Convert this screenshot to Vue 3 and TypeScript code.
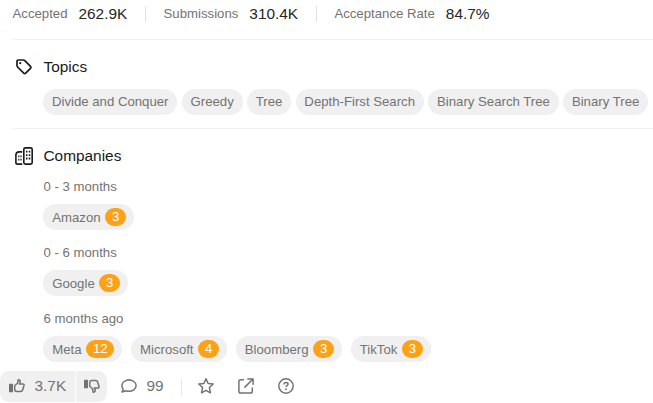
<script setup lang="ts">
interface Stat {
  label: string
  value: string
}

interface CompanyGroup {
  period: string
  companies: { name: string; count: number }[]
}

const stats: Stat[] = [
  { label: 'Accepted', value: '262.9K' },
  { label: 'Submissions', value: '310.4K' },
  { label: 'Acceptance Rate', value: '84.7%' },
]

const topics: string[] = [
  'Divide and Conquer',
  'Greedy',
  'Tree',
  'Depth-First Search',
  'Binary Search Tree',
  'Binary Tree',
]

const groups: CompanyGroup[] = [
  { period: '0 - 3 months', companies: [{ name: 'Amazon', count: 3 }] },
  { period: '0 - 6 months', companies: [{ name: 'Google', count: 3 }] },
  {
    period: '6 months ago',
    companies: [
      { name: 'Meta', count: 12 },
      { name: 'Microsoft', count: 4 },
      { name: 'Bloomberg', count: 3 },
      { name: 'TikTok', count: 3 },
    ],
  },
]
</script>

<template>
  <main class="panel">
    <div class="stats">
      <div v-for="s in stats" :key="s.label" class="stat">
        <span class="stat-label">{{ s.label }}</span>
        <span class="stat-value">{{ s.value }}</span>
      </div>
    </div>

    <section class="section topics">
      <h2 class="heading">
        <svg class="icon" viewBox="0 0 18 18" fill="none" stroke="currentColor" stroke-width="1.7" stroke-linejoin="round">
          <path d="M2 3.2Q2 2 3.2 2H8.4Q9.2 2 9.8 2.6L15.5 8.3Q16.5 9.3 15.5 10.3L10.7 15.1Q9.7 16.1 8.7 15.1L2.6 9Q2 8.4 2 7.6Z" />
          <circle cx="5.2" cy="5.2" r="1.1" fill="currentColor" stroke="none" />
        </svg>
        Topics
      </h2>
      <div class="chips">
        <span v-for="t in topics" :key="t" class="chip">{{ t }}</span>
      </div>
    </section>

    <section class="section companies">
      <h2 class="heading">
        <svg class="icon" viewBox="0 0 18 18" fill="none" stroke="currentColor" stroke-width="1.6" stroke-linejoin="round">
          <rect x="8.8" y=".9" width="8.4" height="16.2" rx="1.6" />
          <path d="M7.2 4.9H4.2Q.9 4.9 .9 8V15.4Q.9 17.1 2.6 17.1H7.2" />
          <path class="windows" d="M11 4.7h1.5M13.8 4.7h1.5M11 8.1h1.5M13.8 8.1h1.5M11 11.5h1.5M13.8 11.5h1.5M3.2 9.3h1.2M5.4 9.3h1.2M3.2 12.7h1.2M5.4 12.7h1.2" />
        </svg>
        Companies
      </h2>
      <div v-for="g in groups" :key="g.period" class="group">
        <div class="period">{{ g.period }}</div>
        <div class="chips company-chips">
          <span v-for="c in g.companies" :key="c.name" class="chip">
            {{ c.name }}<span class="count">{{ c.count }}</span>
          </span>
        </div>
      </div>
    </section>

    <footer class="actions">
      <div class="votes">
        <button class="vote up" aria-label="Like">
          <svg class="action-icon" viewBox="0 0 16 16">
            <rect x="0" y="5.7" width="4" height="8.6" rx=".5" fill="currentColor" />
            <path d="M5.7 7.5L8.4 5.5L9.3 1.8C11 1.6 11.5 3.1 11 4.4L10.4 6H13.8Q15.4 6 15 7.5L13.5 12.2Q13.1 13.5 11.8 13.5H7.8Q5.7 13.5 5.7 11.3Z" fill="none" stroke="currentColor" stroke-width="1.5" stroke-linejoin="round" />
          </svg>
          3.7K
        </button>
        <button class="vote down" aria-label="Dislike">
          <svg class="action-icon" viewBox="0 0 16 16">
            <rect x="0" y="1.7" width="4" height="8.6" rx=".5" fill="currentColor" />
            <path d="M5.7 8.5L8.4 10.5L9.3 14.2C11 14.4 11.5 12.9 11 11.6L10.4 10H13.8Q15.4 10 15 8.5L13.5 3.8Q13.1 2.5 11.8 2.5H7.8Q5.7 2.5 5.7 4.7Z" fill="none" stroke="currentColor" stroke-width="1.5" stroke-linejoin="round" />
          </svg>
        </button>
      </div>
      <button class="action comments">
        <svg class="action-icon" viewBox="0 0 16 16" fill="none" stroke="currentColor" stroke-width="1.5" stroke-linejoin="round">
          <path d="M.9 13.9C1.9 13 2.2 12 2 10.8C.1 8.4 .7 5.2 3.2 3.5C6 1.6 10 1.6 12.8 3.5C15.9 5.6 15.9 9.6 12.8 11.8C10.3 13.5 7.1 13.6 4.5 12.7C3.4 13.4 2.2 13.8 .9 13.9Z" />
        </svg>
        99
      </button>
      <span class="separator"></span>
      <button class="action" aria-label="Favorite">
        <svg class="action-icon star" viewBox="0 0 18 18" fill="none" stroke="currentColor" stroke-width="1.5" stroke-linejoin="round">
          <path d="M9 1.8L11.1 6.4L16.2 7L12.4 10.5L13.4 15.8L9 13.3L4.6 15.8L5.6 10.5L1.8 7L6.9 6.4Z" />
        </svg>
      </button>
      <button class="action" aria-label="Share">
        <svg class="action-icon" viewBox="0 0 16 16" fill="none" stroke="currentColor" stroke-width="1.5" stroke-linecap="round" stroke-linejoin="round">
          <path d="M5.5 1.7H2.7Q.9 1.7 .9 3.5V13.3Q.9 15.1 2.7 15.1H12.5Q14.3 15.1 14.3 13.3V10M9.8 .9H15.1V6.2M15 1L6.9 9.1" />
        </svg>
      </button>
      <button class="action" aria-label="Help">
        <svg class="action-icon" viewBox="0 0 16 16" fill="none" stroke="currentColor" stroke-width="1.5">
          <circle cx="8" cy="8" r="7.2" />
          <path d="M6 6.5C6 5.2 6.9 4.6 8 4.6S10 5.2 10 6.3C10 7.5 8 7.8 8 9.1" />
          <circle cx="8" cy="11.2" r=".95" fill="currentColor" stroke="none" />
        </svg>
      </button>
    </footer>
  </main>
</template>

<style>
body {
  background: #fff;
  overflow: hidden;
}
</style>

<style scoped>
.panel {
  box-sizing: border-box;
  width: 653px;
  height: 403px;
  overflow: hidden;
  display: flex;
  flex-direction: column;
  font-family: "Liberation Sans", Arial, sans-serif;
  font-size: 13.2px;
  color: #737373;
}
.stats {
  display: flex;
  height: 28px;
  align-items: center;
  padding-left: 12.5px;
}
.stat {
  display: flex;
  align-items: center;
  height: 16px;
}
.stat + .stat {
  margin-left: 17.6px;
  padding-left: 17.7px;
  border-left: 1px solid #e2e2e2;
}
.stat-label {
  margin-right: 11px;
  padding-bottom: 2px;
}
.stat-value {
  font-size: 15.4px;
  color: #262626;
}
.section {
  margin-left: 13px;
  border-top: 1px solid #f0f0f0;
}
.topics {
  margin-top: 11px;
  height: 88px;
}
.companies {
  height: 242px;
}
.heading {
  display: flex;
  align-items: center;
  gap: 10.5px;
  height: 22px;
  margin: 16px 0 0 2px;
  font-size: 15.4px;
  font-weight: 400;
  color: #1a1a1a;
}
.icon {
  width: 18px;
  height: 18px;
}
.windows {
  stroke-width: 1.8;
}
.chips {
  display: flex;
  gap: 4.3px;
  margin: 11px 0 0 30.1px;
}
.chip {
  display: flex;
  flex-shrink: 0;
  align-items: center;
  box-sizing: border-box;
  height: 26.2px;
  padding: 0 8.85px 2px;
  border-radius: 14px;
  background: #f0f0f0;
  white-space: nowrap;
}
.group {
  height: 66px;
  padding-left: 30px;
}
.heading + .group {
  margin-top: 11px;
}
.period {
  height: 18px;
  line-height: 18px;
  padding-left: .5px;
}
.company-chips {
  gap: 8.6px;
  margin: 8.2px 0 0;
}
.company-chips .chip {
  padding: 0 7.9px 0 9.2px;
}
.count {
  margin-left: 4.6px;
  padding: 0 6.8px;
  border-radius: 9px;
  background: #ffa116;
  color: #fff;
  line-height: 18px;
}
.actions {
  display: flex;
  align-items: center;
  height: 31px;
}
.votes {
  display: flex;
  gap: 1px;
  height: 31px;
  border-radius: 9px;
  overflow: hidden;
}
button {
  display: flex;
  align-items: center;
  padding: 0 0 1px;
  border: 0;
  background: none;
  color: #737373;
  font: 15.4px "Liberation Sans", Arial, sans-serif;
}
.vote {
  background: #f0f0f0;
}
.up {
  box-sizing: border-box;
  width: 75px;
  gap: 9.5px;
  padding-left: 9px;
}
.down {
  box-sizing: border-box;
  width: 31px;
  padding-left: 8px;
}
.action-icon {
  width: 16px;
  height: 16px;
}
.comments {
  gap: 9.5px;
  margin-left: 14px;
}
.separator {
  width: 1px;
  height: 18px;
  margin: 0 -8px 0 17px;
  background: #e8e8e8;
}
.separator ~ .action {
  margin-left: 24px;
}
.star {
  width: 18px;
  height: 18px;
  margin: 0 -1px;
}
</style>
